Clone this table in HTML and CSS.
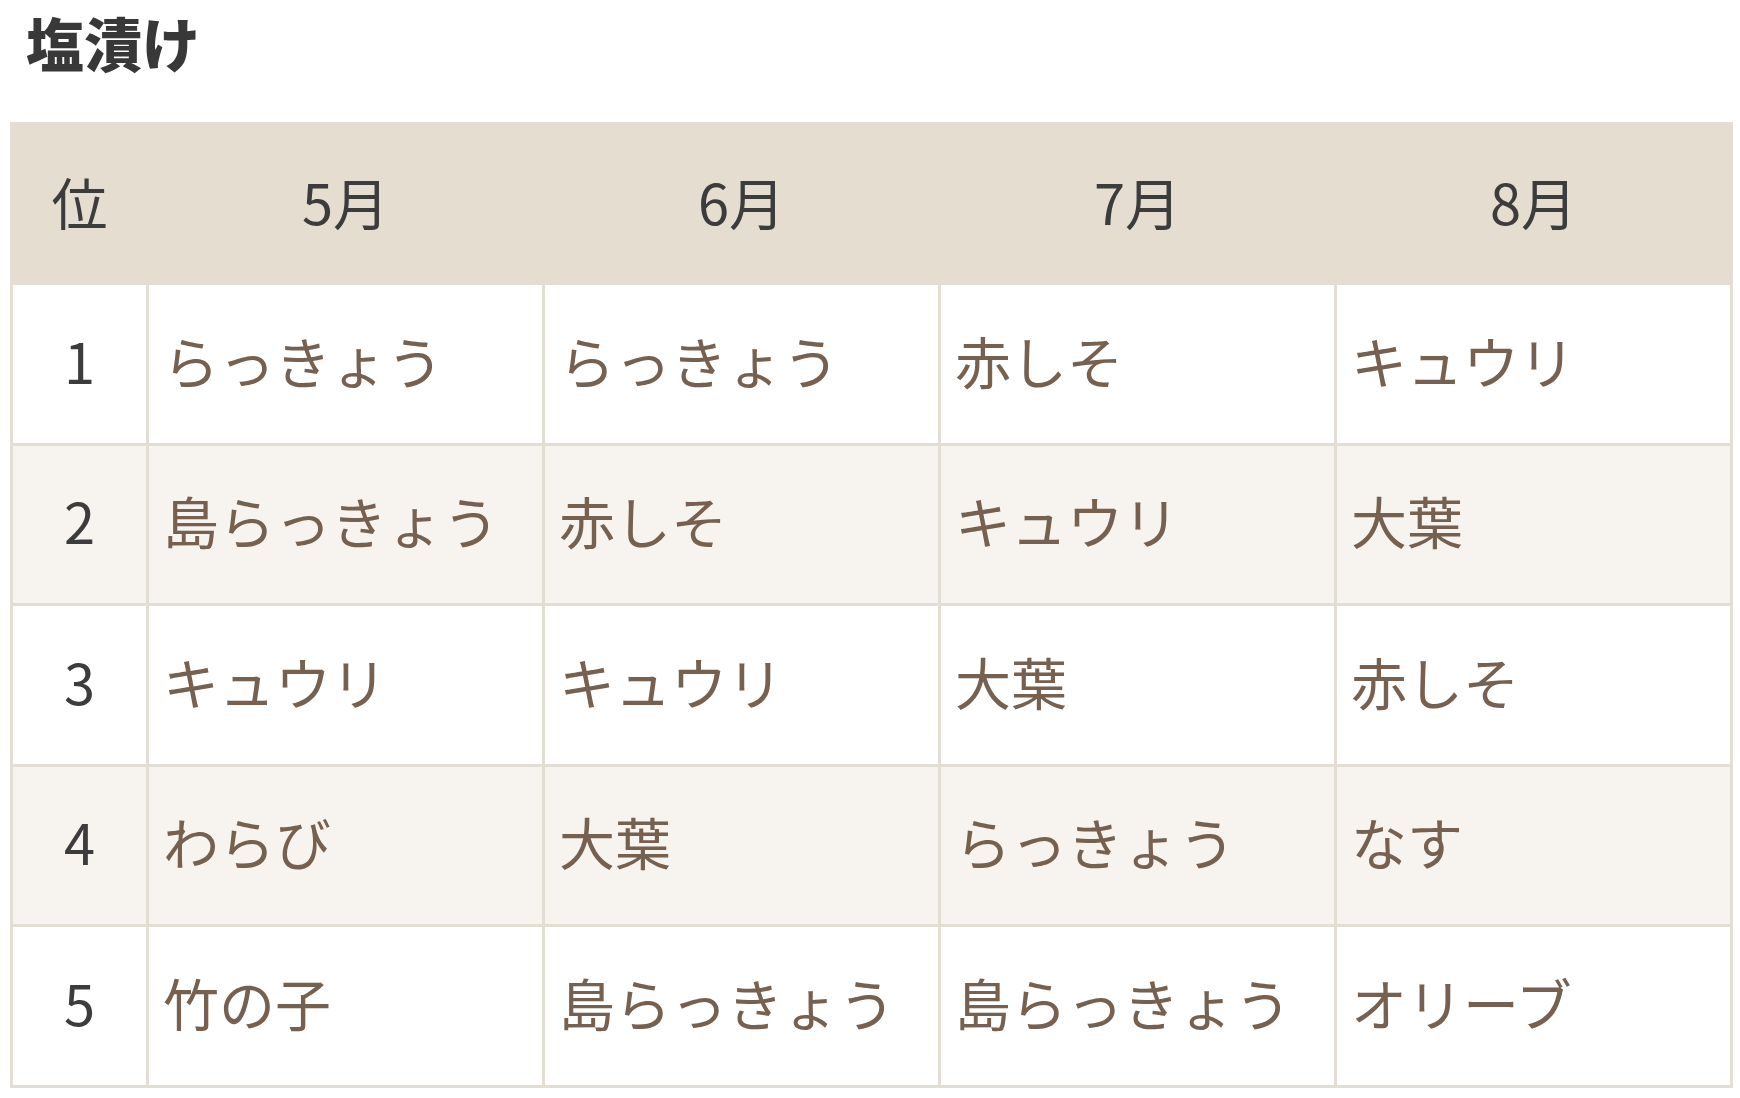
FILE: index.html
```html
<!DOCTYPE html>
<html lang="ja">
<head>
<meta charset="utf-8">
<title>塩漬け</title>
<link rel="stylesheet" href="styles.css">
</head>
<body>
<h2 class="title">塩漬け</h2>
<table class="rank">
  <colgroup>
    <col class="c-rank">
    <col class="c-month">
    <col class="c-month">
    <col class="c-month">
    <col class="c-month">
  </colgroup>
  <thead>
    <tr><th>位</th><th>5月</th><th>6月</th><th>7月</th><th>8月</th></tr>
  </thead>
  <tbody>
    <tr><td class="num">1</td><td>らっきょう</td><td>らっきょう</td><td>赤しそ</td><td>キュウリ</td></tr>
    <tr><td class="num">2</td><td>島らっきょう</td><td>赤しそ</td><td>キュウリ</td><td>大葉</td></tr>
    <tr><td class="num">3</td><td>キュウリ</td><td>キュウリ</td><td>大葉</td><td>赤しそ</td></tr>
    <tr><td class="num">4</td><td>わらび</td><td>大葉</td><td>らっきょう</td><td>なす</td></tr>
    <tr><td class="num">5</td><td>竹の子</td><td>島らっきょう</td><td>島らっきょう</td><td>オリーブ</td></tr>
  </tbody>
</table>
</body>
</html>
```
FILE: styles.css
```css
html, body {
  margin: 0;
  padding: 0;
  background: #ffffff;
}
body {
  font-family: "Noto Sans CJK JP", "Noto Sans", sans-serif;
}
.title {
  margin: 0;
  padding: 4px 0 0 26px;
  height: 114px;
  box-sizing: border-box;
  font-size: 58px;
  line-height: 76px;
  font-weight: 900;
  color: #383838;
  letter-spacing: 0;
}
.rank {
  margin: 8px 0 0 10px;
  width: 1720px;
  border-collapse: collapse;
  table-layout: fixed;
  font-size: 56px;
}
.c-rank { width: 136px; }
.c-month { width: 396px; }
.rank th {
  background: #e4ddd0;
  color: #3c3c3c;
  font-weight: 400;
  height: 152px;
  padding: 0 0 5px 0;
  line-height: 1;
  text-align: center;
  vertical-align: middle;
  border: 3px solid #e4ddd0;
  border-bottom: none;
}
.rank td {
  height: 149.5px;
  padding: 0 0 8px 14px;
  border: 3px solid #e3ded4;
  color: #76604f;
  text-align: left;
  vertical-align: middle;
  white-space: nowrap;
  line-height: 1;
}
.rank td.num {
  padding: 0 0 8px 0;
  text-align: center;
  color: #3c3c3c;
}
.rank tbody tr:nth-child(odd) td { background: #ffffff; }
.rank tbody tr:nth-child(even) td { background: #f7f4ef; }
```
